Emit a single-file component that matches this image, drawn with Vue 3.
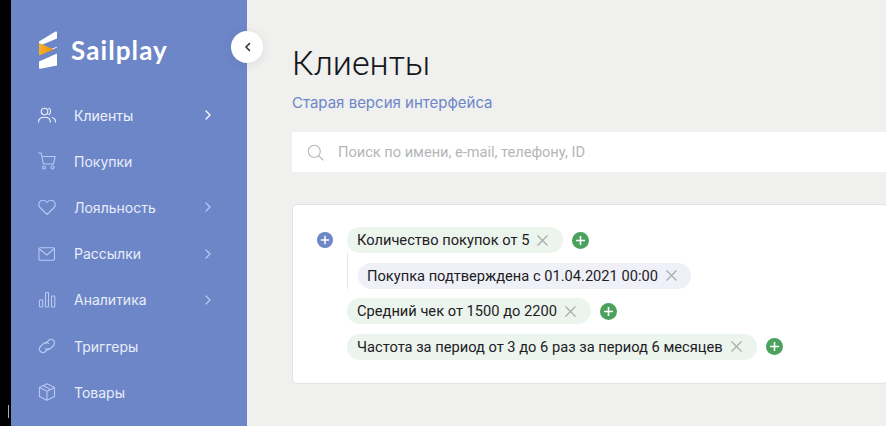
<script setup>
const nav = [
  { key: 'users', label: 'Клиенты', arrow: true, bright: true },
  { key: 'cart', label: 'Покупки' },
  { key: 'heart', label: 'Лояльность', arrow: true },
  { key: 'mail', label: 'Рассылки', arrow: true },
  { key: 'chart', label: 'Аналитика', arrow: true },
  { key: 'link', label: 'Триггеры' },
  { key: 'box', label: 'Товары' },
]
const rows = [
  { text: 'Количество покупок от 5', add: true },
  { text: 'Покупка подтверждена с 01.04.2021 00:00', sub: true },
  { text: 'Средний чек от 1500 до 2200', add: true },
  { text: 'Частота за период от 3 до 6 раз за период 6 месяцев', add: true },
]
</script>

<template>
  <div class="page">
    <div class="edge"><i class="edge-mark"></i></div>
    <aside class="side">
      <div class="logo">
        <svg class="logo-mark" width="19" height="38" viewBox="0 0 19 38">
          <defs>
            <linearGradient id="sail" x1="0" y1="0" x2="1" y2="0">
              <stop offset="0" stop-color="#f5b02e" />
              <stop offset="1" stop-color="#ee8f08" />
            </linearGradient>
          </defs>
          <path d="M1 10.500 17.500.6q1.500-.6 1.500 1V7.500L1 15z" fill="#fff" />
          <path d="M1 24 19 16.500v-.8L1 22.500zM1 30.500 19 22.500v12L2.500 37.700q-1.500.3-1.500-1z" fill="#fff" />
          <path d="M1 12 16 18.500 1 24.500z" fill="url(#sail)" />
        </svg>
        <span class="logo-text">Sailplay</span>
      </div>
      <nav class="nav">
        <div v-for="n in nav" :key="n.key" class="item">
          <svg class="ico" width="18" height="18" viewBox="0 0 18 18" fill="none" :stroke="n.bright ? '#eef2fc' : '#b7c9f5'" stroke-width="1.1" stroke-linecap="round" stroke-linejoin="round">
            <template v-if="n.key === 'users'">
              <circle cx="6.500" cy="5.500" r="3.300" />
              <path d="M.6 16c0-3 2.200-4.800 5.900-4.800s5.900 1.800 5.900 4.800" />
              <path d="M10.800 2.400c2.300.6 2.300 5.600 0 6.200M14.200 11.500c2 .6 3.300 2.200 3.300 4.500" />
            </template>
            <template v-else-if="n.key === 'cart'">
              <path d="M.5 1h2.700l2.200 11h10l1.800-7.500H4" />
              <circle cx="6" cy="15.500" r="1.500" />
              <circle cx="14.500" cy="15.500" r="1.500" />
            </template>
            <path v-else-if="n.key === 'heart'" d="M9 16.500 2 9.500C-.5 6.800 1.200 2.200 5 2.200c1.800 0 3.200 1 4 2.400.8-1.400 2.200-2.400 4-2.400 3.800 0 5.500 4.600 3 7.300z" />
            <template v-else-if="n.key === 'mail'">
              <rect x="1" y="2.800" width="15.500" height="12.500" rx="1.200" />
              <path d="m1.500 4 7.300 6L16 4" />
            </template>
            <template v-else-if="n.key === 'chart'">
              <rect x="1.500" y="9" width="3.300" height="7" rx=".7" />
              <rect x="7.500" y="1.500" width="3" height="14.500" rx=".7" />
              <rect x="13.500" y="5" width="3.300" height="11" rx=".7" />
            </template>
            <template v-else-if="n.key === 'link'">
              <path d="M7.500 6.500 10.500 3.500a3.500 3.500 0 0 1 5 5l-3 3a3.500 3.500 0 0 1-5 0" />
              <path d="M10.500 11.500 7.500 14.500a3.500 3.500 0 0 1-5-5l3-3a3.500 3.500 0 0 1 5 0" />
            </template>
            <template v-else>
              <path d="M9 .8 16.500 4.500v9L9 17.200 1.500 13.500v-9z" />
              <path d="M1.800 4.700 9 8.200l7.200-3.500M9 8.200v8.800M5.200 2.700l7.500 3.700" />
            </template>
          </svg>
          <span class="label" :class="{ bright: n.bright }">{{ n.label }}</span>
          <svg v-if="n.arrow" class="arrow" width="6" height="10" viewBox="0 0 6 10" fill="none" :stroke="n.bright ? '#fff' : '#b7c9f5'" stroke-width="1.200" stroke-linecap="round" stroke-linejoin="round">
            <path d="m1 1 4 4-4 4" />
          </svg>
        </div>
      </nav>
    </aside>
    <button class="collapse" type="button" aria-label="Свернуть">
      <svg width="7" height="10" viewBox="0 0 7 10" fill="none" stroke="#2b3038" stroke-width="1.600" stroke-linecap="round" stroke-linejoin="round">
        <path d="M5.500 1.500 2 5l3.500 3.500" />
      </svg>
    </button>
    <main class="main">
      <h1 class="title">Клиенты</h1>
      <a class="old">Старая версия интерфейса</a>
      <div class="search">
        <svg width="17" height="17" viewBox="0 0 17 17" fill="none" stroke="#b4b7b9" stroke-width="1.100" stroke-linecap="round">
          <circle cx="7.300" cy="7.300" r="6" />
          <path d="m11.800 11.800 4.200 4.200" />
        </svg>
        <span class="placeholder">Поиск по имени, e-mail, телефону, ID</span>
      </div>
      <section class="card">
        <div class="lead">
          <svg width="16" height="16" viewBox="0 0 16 16"><circle cx="8" cy="8" r="8" fill="#6d86c7" /><path d="M8 3.800v8.400M3.800 8h8.400" stroke="#fff" stroke-width="1.500" /></svg>
        </div>
        <div class="rows">
          <div v-for="r in rows" :key="r.text" class="row" :class="{ sub: r.sub }">
            <div class="chip" :class="{ gray: r.sub }">
              <span>{{ r.text }}</span>
              <svg width="11" height="11" viewBox="0 0 11 11" stroke="#a4aaa8" stroke-width="1.100" fill="none"><path d="m.5.5 10 10M10.500.5l-10 10" /></svg>
            </div>
            <svg v-if="r.add" class="add" width="17" height="17" viewBox="0 0 17 17"><circle cx="8.500" cy="8.500" r="8.500" fill="#4ca25c" /><path d="M8.500 4v9M4 8.500h9" stroke="#fff" stroke-width="1.600" /></svg>
          </div>
        </div>
      </section>
    </main>
  </div>
</template>

<style>
html, body { margin: 0; overflow: hidden; background: #f0f0ee; }
</style>

<style scoped>
.page { position: relative; display: flex; width: 886px; height: 426px; overflow: hidden; background: #f0f0ee; font-family: Inter, "Liberation Sans", sans-serif; }
.edge { position: relative; flex: 0 0 11px; background: #000; }
.edge-mark { position: absolute; left: 8px; bottom: 8px; width: 1px; height: 13px; background: #a9b0a8; }
.side { flex: 0 0 236px; background: #6d86c7; box-sizing: border-box; padding-top: 31px; }
.logo { display: flex; align-items: center; height: 38px; padding-left: 27px; }
.logo-mark { flex: none; }
.logo-text { margin-left: 14px; color: #fff; font-family: Lato, sans-serif; font-weight: 700; font-size: 26px; letter-spacing: 1.100px; }
.nav { margin-top: 23px; }
.item { display: flex; align-items: center; height: 46.200px; padding-left: 27px; }
.ico { flex: none; }
.label { flex: 1; margin-left: 18px; color: #e8edfb; font-size: 14px; }
.label.bright { color: #eef2fc; }
.arrow { flex: none; margin-right: 36px; }
.collapse { position: absolute; left: 231px; top: 31px; width: 32px; height: 32px; padding: 0; display: flex; align-items: center; justify-content: center; border: 0; border-radius: 50%; background: #fff; box-shadow: 0 2px 10px rgba(60, 70, 90, .12); }
.main { flex: 1; min-width: 0; padding: 43px 0 0 45px; }
.title { margin: 0; height: 40px; font-family: Roboto, sans-serif; font-weight: 300; font-size: 34px; line-height: 40px; color: #15171a; }
.old { display: block; margin-top: 10px; color: #6d86c7; font-size: 15px; line-height: 20px; }
.search { display: flex; align-items: center; height: 40px; margin-top: 19px; padding-left: 15px; background: #fff; }
.placeholder { margin-left: 14px; color: #b3b6b9; font-family: Roboto, sans-serif; font-size: 14.600px; }
.card { display: flex; box-sizing: border-box; height: 180px; margin-top: 32px; margin-right: -2px; padding: 22px 0 0 24px; background: #fff; border: 1px solid #e3e3e1; border-radius: 5px; }
.lead { flex: none; width: 30px; padding-top: 5px; }
.rows { display: flex; flex-direction: column; gap: 9.500px; }
.row { display: flex; align-items: center; gap: 9px; }
.row.sub { margin-top: -9.500px; padding: 9.500px 0 0 10px; border-left: 1px solid #e3e6ec; }
.chip { display: flex; align-items: center; gap: 8px; height: 26px; padding: 0 15px 0 10px; border-radius: 13px; background: #ebf4ed; color: #1d2024; font-family: Roboto, sans-serif; font-size: 14.660px; white-space: nowrap; }
.chip.gray { background: #f0f1f8; padding: 0 14px 0 9px; }
.add { flex: none; }
</style>
